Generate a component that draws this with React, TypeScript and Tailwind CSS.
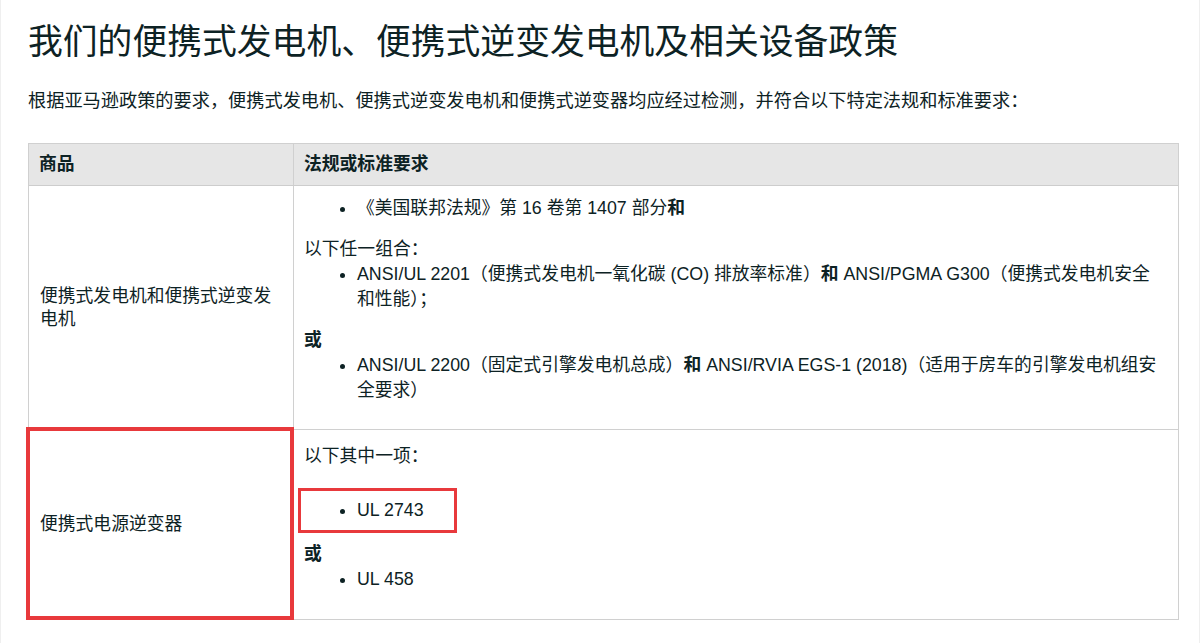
import React from "react";

const font = { fontFamily: '"Liberation Sans", "Noto Sans CJK SC", Arial, sans-serif' };

export default function App() {
  return (
    <div
      className="w-[1200px] h-[643px] bg-white text-[#0d2224] border-x border-[#efefef] overflow-hidden"
      style={font}
    >
      <div className="pl-[27px] pr-[21px]">
        <h1 className="mt-[20px] text-[34.8px] leading-[44px] font-normal whitespace-nowrap">
          我们的便携式发电机、便携式逆变发电机及相关设备政策
        </h1>
        <p className="mt-[23px] text-[18.2px] leading-[28px] whitespace-nowrap">
          根据亚马逊政策的要求，便携式发电机、便携式逆变发电机和便携式逆变器均应经过检测，并符合以下特定法规和标准要求：
        </p>

        <div className="mt-[28px] w-[1151px] border border-[#d0d0d0] text-[17.8px]">
          {/* header */}
          <div className="grid grid-cols-[265px_1fr] bg-[#e6e6e6] border-b border-[#cdcdcd] h-[42px]">
            <div className="border-r border-[#d0d0d0] pl-[10px] flex items-center font-bold">商品</div>
            <div className="pl-[10px] flex items-center font-bold">法规或标准要求</div>
          </div>

          {/* row 1 */}
          <div className="grid grid-cols-[265px_1fr] border-b border-[#d0d0d0] h-[244px]">
            <div className="border-r border-[#d0d0d0] px-[11px] flex items-center leading-[23px]">
              便携式发电机和便携式逆变发电机
            </div>
            <div className="pt-[10px] pl-[10px] pr-[12px] leading-[25px]">
              <ul className="list-disc pl-[53px]">
                <li>
                  《美国联邦法规》第 16 卷第 1407 部分<b className="font-bold">和</b>
                </li>
              </ul>
              <p className="mt-[16px]">以下任一组合：</p>
              <ul className="list-disc pl-[53px]">
                <li>
                  ANSI/UL 2201（便携式发电机一氧化碳 (CO) 排放率标准）<b className="font-bold">和</b> ANSI/PGMA G300（便携式发电机安全和性能）；
                </li>
              </ul>
              <p className="mt-[16px] font-bold">或</p>
              <ul className="list-disc pl-[53px]">
                <li>
                  ANSI/UL 2200（固定式引擎发电机总成）<b className="font-bold">和</b> ANSI/RVIA EGS-1 (2018)（适用于房车的引擎发电机组安全要求）
                </li>
              </ul>
            </div>
          </div>

          {/* row 2 */}
          <div className="relative grid grid-cols-[265px_1fr] h-[189px]">
            <div className="border-r border-[#d0d0d0] px-[11px] flex items-center leading-[23px]">
              便携式电源逆变器
            </div>
            <div className="pt-[14px] px-[10px] leading-[25px]">
              <p>以下其中一项：</p>
              <ul className="mt-[19px] ml-[-6px] w-[159px] list-disc pl-[56px] py-[7px] border-[3px] border-[#e8393c]">
                <li>UL 2743</li>
              </ul>
              <p className="mt-[9px] font-bold">或</p>
              <ul className="list-disc pl-[53px]">
                <li>UL 458</li>
              </ul>
            </div>
            <div className="pointer-events-none absolute left-[-3px] top-[-3px] w-[268px] h-[193px] border-[4px] border-[#e8393c]" />
          </div>
        </div>
      </div>
    </div>
  );
}
